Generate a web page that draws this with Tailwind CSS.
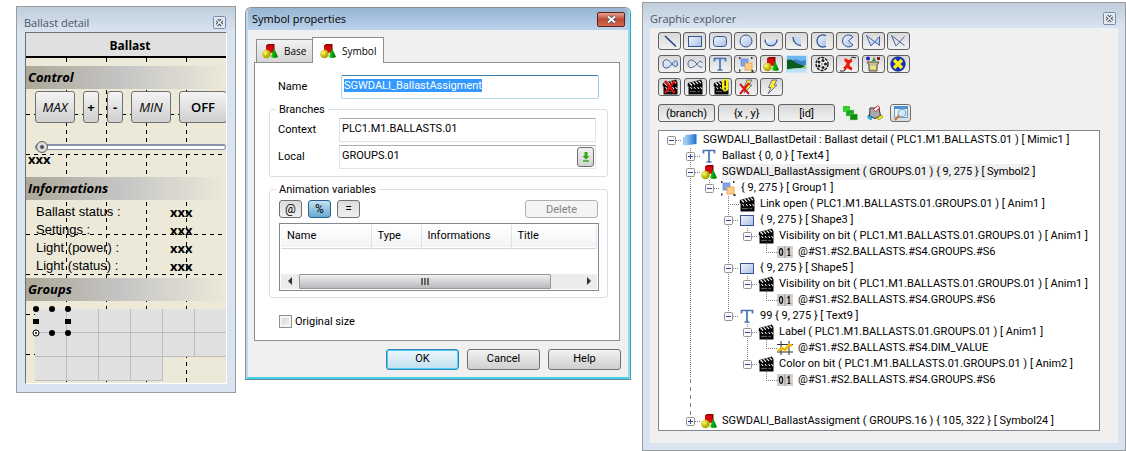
<!DOCTYPE html>
<html lang="en">

<head>
    <meta charset="UTF-8">
    <meta name="viewport" content="width=device-width, initial-scale=1.0">
    <title>Graphic explorer</title>
    <script src="https://cdn.jsdelivr.net/npm/@tailwindcss/browser@4"></script>
</head>

<body class="bg-white text-black text-[11px] leading-4 font-['Roboto','Liberation_Sans',Arial,sans-serif]">
    <!-- Icon definitions -->
    <svg class="absolute w-0 h-0" aria-hidden="true">
        <defs>
            <linearGradient id="blueFill" x1="0" y1="0" x2="1" y2="1">
                <stop offset="0" stop-color="#f2f6fd" />
                <stop offset="1" stop-color="#a9bfe8" />
            </linearGradient>
            <radialGradient id="ballFill" cx="35%" cy="35%">
                <stop offset="0" stop-color="#ffff70" />
                <stop offset="1" stop-color="#b5a800" />
            </radialGradient>
            <linearGradient id="coneFill">
                <stop offset="0" stop-color="#12d512" />
                <stop offset="1" stop-color="#046a04" />
            </linearGradient>
            <linearGradient id="screenFill">
                <stop offset="0" stop-color="#a8d4f8" />
                <stop offset="1" stop-color="#1c6fd0" />
            </linearGradient>
        </defs>
        <symbol id="i-line" viewBox="0 0 16 16">
            <path d="M3 3 14 13.500" stroke="#1f3e7c" stroke-width="1.500" />
        </symbol>
        <symbol id="i-rect" viewBox="0 0 16 16">
            <rect x="1.500" y="3.500" width="13" height="10" fill="url(#blueFill)" stroke="#35568f" />
        </symbol>
        <symbol id="i-round" viewBox="0 0 16 16">
            <rect x="1.500" y="3.500" width="13" height="10" rx="3" fill="url(#blueFill)" stroke="#35568f" />
        </symbol>
        <symbol id="i-circle" viewBox="0 0 16 16">
            <circle cx="8" cy="8" r="6" fill="url(#blueFill)" stroke="#35568f" />
        </symbol>
        <symbol id="i-half" viewBox="0 0 16 16">
            <path d="M2 6.500C2 15 14 15 14 6.500" fill="url(#blueFill)" stroke="#35568f" stroke-width="1.300" />
        </symbol>
        <symbol id="i-quarter" viewBox="0 0 16 16">
            <path d="M4 4H12V12.500C8 12.500 4 9 4 4" fill="#c9d8f2" />
            <path d="M4 4C4 9 8 12.500 12 12.500" fill="none" stroke="#35568f" stroke-width="1.300" />
        </symbol>
        <symbol id="i-chord" viewBox="0 0 16 16">
            <path d="M12 2.800A6 6 0 1 0 12 13.200" fill="url(#blueFill)" stroke="#35568f" stroke-width="1.200" />
        </symbol>
        <symbol id="i-pie" viewBox="0 0 16 16">
            <path d="M13 4A6 6 0 1 0 13 12L8.500 8Z" fill="url(#blueFill)" stroke="#35568f" />
        </symbol>
        <symbol id="i-poly" viewBox="0 0 16 16">
            <path d="M1.500 2.500 6 13 14.500 3.500V12.500Z" fill="url(#blueFill)" stroke="#43659f" />
        </symbol>
        <symbol id="i-polyline" viewBox="0 0 16 16">
            <path d="M14.500 12.500 1.500 2.500 6 13 14.500 3.500" fill="none" stroke="#43659f" />
        </symbol>
        <symbol id="i-loop" viewBox="0 0 16 16">
            <path d="M10 8C7 3 1 2 1 8S7 13 10 8 15.500 4.500 15.500 8 13 11.500 10 8Z" fill="url(#blueFill)" stroke="#43659f" />
        </symbol>
        <symbol id="i-curve" viewBox="0 0 16 16">
            <path d="M15.500 11C12 12 10 8 9 7 6 3 1 2.500 1 8S7 12 10 8 14 5 15.500 7" fill="none" stroke="#43659f" />
        </symbol>
        <symbol id="i-text" viewBox="0 0 16 16">
            <path d="M2.500 5.500V2.500H13.500V5.500M8 2.500V14M5.500 14H10.500" fill="none" stroke="#4a72b4" stroke-width="1.700" />
        </symbol>
        <symbol id="i-group" viewBox="0 0 16 16">
            <rect x="3" y="3" width="7" height="7" fill="#7fa4f0" stroke="#4f7ddb" stroke-width=".6" />
            <rect x="7" y="7" width="7" height="7" fill="#ffcf8a" stroke="#e89a3c" stroke-width=".8" />
            <path d="M1 2H2.500M13 2H14.500M1 14.500H2.500M13.500 15H15.500" stroke="#333" stroke-width="1.800" />
        </symbol>
        <symbol id="i-shapes" viewBox="0 0 16 16">
            <path d="M4 2.500 6 1H12.500V8L11 9.500H4Z" fill="#8f0000" />
            <path d="M4 2.500H11V9.500H4Z" fill="#d40a0a" />
            <path d="M12 5 16 14Q12.500 16 9 14Z" fill="url(#coneFill)" />
            <circle cx="4.500" cy="11" r="4.300" fill="url(#ballFill)" />
        </symbol>
        <symbol id="i-image" viewBox="0 0 21 18" preserveAspectRatio="none">
            <path d="M0 0H21V18H0Z" fill="#c9e8ff" />
            <path d="M1 1H20V8H1Z" fill="#6db9ef" />
            <path d="M9 4 15 6 20 5V10H4Z" fill="#3d7fc2" />
            <path d="M1 10H20V17H1Z" fill="#8dd08a" />
            <path d="M1 5Q6 3 10 8L19 11 15 13 1 14Z" fill="#0c5a20" />
            <path d="M1 15Q10 12 20 14V17H1Z" fill="#b9e3f5" />
        </symbol>
        <symbol id="i-reel" viewBox="0 0 16 16">
            <ellipse cx="8" cy="8" rx="6" ry="6.500" fill="#eee" stroke="#111" stroke-width="1.300" stroke-dasharray="3 1" />
            <g fill="#222">
                <circle cx="5" cy="6" r="1.500" />
                <circle cx="9" cy="4.500" r="1.500" />
                <circle cx="11.500" cy="8" r="1.500" />
                <circle cx="9" cy="11.500" r="1.500" />
                <circle cx="5" cy="10" r="1.500" />
                <circle cx="8" cy="8" r=".7" />
            </g>
        </symbol>
        <symbol id="i-cross" viewBox="0 0 16 16">
            <path d="M0 15H4L6 13M11 2 13 1 16 2" fill="none" stroke="#222" />
            <path d="M4.500 4Q8 4 8 8T12 13M12 4Q9 5 8 8T4 13" fill="none" stroke="#ec1c0c" stroke-width="3" />
        </symbol>
        <symbol id="i-basket" viewBox="0 0 16 16">
            <circle cx="3" cy="2.500" r="2" fill="#1b22c8" />
            <path d="M9 1 11 5H7Z" fill="#2a8a3a" />
            <rect x="12" y="1" width="3" height="3" fill="#8c2020" />
            <path d="M2 6H14L12 9V15H4V9Z" fill="#c9c096" stroke="#554f35" />
            <path d="M5 10H11V13H5Z" fill="#ece77a" />
        </symbol>
        <symbol id="i-bluex" viewBox="0 0 16 16">
            <circle cx="8" cy="8" r="7.300" fill="#1030c8" stroke="#0a1a70" stroke-width=".6" />
            <path d="M4 4 12 12M12 4 4 12" stroke="#ffee10" stroke-width="3.400" />
        </symbol>
        <symbol id="i-clap" viewBox="0 0 16 16">
            <path d="M1.500 8H15.500V15.500H1.500Z" fill="#0a0a0a" />
            <path d="M.5 7 1 4 14 .5 15.500 3.500 15.500 8H2Z" fill="#0a0a0a" />
            <path d="M2.500 4 5 6.500M5.500 3.200 8 5.700M8.500 2.400 11 4.900M11.500 1.600 14 4.100" stroke="#fff" stroke-width="1.100" />
            <path d="M3.500 8 5 10M7 8 8.500 10M10.500 8 12 10M13.500 8 15 10" stroke="#fff" />
            <path d="M3 12.500H9M10.500 12.500H13" stroke="#777" stroke-width=".8" />
        </symbol>
        <symbol id="i-clapx" viewBox="0 0 16 16">
            <use href="#i-clap" />
            <path d="M3 2 12.500 14M12.500 2 3 14" stroke="#e01010" stroke-width="2.600" />
        </symbol>
        <symbol id="i-clapwarn" viewBox="0 0 16 16">
            <use href="#i-clap" />
            <rect x="9" y="0" width="6.500" height="12" rx="3" fill="#ffee10" />
            <path d="M12.200 1.500V7M12.200 8.500V10.500" stroke="#222" stroke-width="1.500" />
        </symbol>
        <symbol id="i-bolt" viewBox="0 0 16 16">
            <path d="M8 1H13L10 6H13L4 15 7 8.500H4.500Z" fill="#ffee20" stroke="#4656c8" stroke-width=".8" />
        </symbol>
        <symbol id="i-boltx" viewBox="0 0 16 16">
            <path d="M9 1H14L11 6H14L6 14 8 8.500H6Z" fill="#ffee20" stroke="#4656c8" stroke-width=".8" />
            <path d="M2 5 11 15M11 4 2 15" stroke="#e01010" stroke-width="2" />
        </symbol>
        <symbol id="i-green" viewBox="0 0 16 16">
            <rect x="1" y="1" width="7" height="6" fill="#35cf2c" />
            <rect x="4" y="5" width="8" height="6" fill="#1aa51a" stroke="#8fe089" stroke-width=".5" />
            <rect x="8" y="9" width="7.500" height="6" fill="#0d8f10" stroke="#8fe089" stroke-width=".5" />
        </symbol>
        <symbol id="i-paint" viewBox="0 0 16 16">
            <path d="M3 3H12L13.500 11 8 13.500 2.500 11Z" fill="#aaa" stroke="#333" />
            <path d="M6.500 4.500 10.500 1 13 2.500 8.500 6.500Z" fill="#fff" stroke="#d02020" />
            <path d="M1 10 5 12.500 4 15 1 13Z" fill="#20c8f0" stroke="#1060a0" stroke-width=".6" />
            <path d="M10 13 14.500 10 16 12 12 15Z" fill="#ffee10" stroke="#807000" stroke-width=".6" />
        </symbol>
        <symbol id="i-find" viewBox="0 0 16 16">
            <path d="M1.500 1.500H14.500V12.500H1.500Z" fill="#e8f3fc" stroke="#6b9cc8" />
            <path d="M1 1H15V4H1Z" fill="#4d92d0" />
            <circle cx="9" cy="8" r="3.800" fill="#d3e9f8" stroke="#86a9c4" stroke-width="1.200" />
            <path d="M6 10.500 2 15" stroke="#c47a45" stroke-width="2.200" />
        </symbol>
        <symbol id="i-screen" viewBox="0 0 16 16">
            <path d="M1 5H4V13H1Z" fill="#9ccaf2" />
            <path d="M3 3 14.500 2V12L3 13.500Z" fill="url(#screenFill)" />
        </symbol>
        <symbol id="i-bits" viewBox="0 0 16 16">
            <rect x="0" y="2" width="16" height="12" fill="#d4d0cb" />
            <path d="M8 2V14" stroke="#999" />
            <ellipse cx="4" cy="8" rx="1.600" ry="3.300" fill="none" stroke="#111" stroke-width="1.300" />
            <path d="M10.500 6 12 4.500V11.500M10.500 11.500H13.500" fill="none" stroke="#111" stroke-width="1.200" />
        </symbol>
        <symbol id="i-chart" viewBox="0 0 16 16">
            <path d="M4 1V15M12 1V15M0 4.500H16M0 12H16" stroke="#333" />
            <path d="M1 11 5 8 8 10 12 5 15 5.500" fill="none" stroke="#f5b800" stroke-width="2.600" />
        </symbol>
        <symbol id="i-plus" viewBox="0 0 9 9">
            <rect x=".5" y=".5" width="8" height="8" rx="1" fill="#fafafa" stroke="#919191" />
            <path d="M2 4.500H7M4.500 2V7" stroke="#3045a0" />
        </symbol>
        <symbol id="i-minus" viewBox="0 0 9 9">
            <rect x=".5" y=".5" width="8" height="8" rx="1" fill="#fafafa" stroke="#919191" />
            <path d="M2 4.500H7" stroke="#3045a0" />
        </symbol>
        <symbol id="i-close" viewBox="0 0 13 13">
            <rect x=".5" y=".5" width="12" height="12" rx="1" fill="#dfe8f3" stroke="#7a8ba6" />
            <path d="M4 4 9 9M9 4 4 9" stroke="#444c58" stroke-width="3.200" />
            <path d="M4 4 9 9M9 4 4 9" stroke="#fff" stroke-width="1.200" />
        </symbol>
    </svg>

    <main class="flex items-start pl-4 pt-[2px]">
        <!-- Ballast detail -->
        <section class="mt-1 w-[220px] shrink-0 border border-[#9c9c9c] bg-[#d9e4f1] px-2 pb-2 font-['Open_Sans','Noto_Sans',sans-serif]">
            <header class="-mx-2 flex h-[25px] items-center justify-between bg-linear-to-b from-[#bfcddb] to-[#d9e4f1] pl-[7px] pr-[9px] pt-[6px]">
                <h2 class="text-[11px] text-[#4c5560]">Ballast detail</h2>
                <button type="button" aria-label="Close"><svg class="block h-[13px] w-[13px]"><use href="#i-close" /></svg></button>
            </header>
            <div class="relative overflow-hidden border border-t-[#707070] border-l-[#707070] border-r-white border-b-white bg-[#ece9d8]">
                <!-- 40px layout grid -->
                <svg class="absolute inset-0 h-full w-full" fill="none" stroke="#000" stroke-dasharray="4 4">
                    <path d="M40.500 25V350M80.500 25V350M120.500 25V350M160.500 25V350" />
                    <path d="M0 81.500H220M0 121.500H220M0 201.500H220M0 241.500H220M0 281.500H220M0 321.500H220" />
                </svg>
                <div class="relative">
                    <h3 class="h-[25px] border-b-2 border-black bg-[#e0e0e0] pt-1 pl-2 text-center text-xs leading-[18px] font-bold">Ballast</h3>
                    <h4 class="mt-2 h-[23px] bg-linear-to-r from-[#aca899] via-[#c6c6c6] to-[#ece9d8] pl-[2px] text-[13px] leading-[23px] font-bold italic">Control</h4>
                    <div class="mt-[2px] flex h-8 gap-2 pl-[9px] text-[13px]">
                        <button type="button" class="w-10 shrink-0 rounded-[3px] border border-[#707070] bg-linear-to-b from-[#f4f4f4] to-[#cfcfcf] italic">MAX</button>
                        <button type="button" class="w-4 shrink-0 rounded-[3px] border border-[#707070] bg-linear-to-b from-[#f4f4f4] to-[#cfcfcf] font-bold">+</button>
                        <button type="button" class="w-4 shrink-0 rounded-[3px] border border-[#707070] bg-linear-to-b from-[#f4f4f4] to-[#cfcfcf] font-bold">-</button>
                        <button type="button" class="w-10 shrink-0 rounded-[3px] border border-[#707070] bg-linear-to-b from-[#f4f4f4] to-[#cfcfcf] italic">MIN</button>
                        <button type="button" class="w-12 shrink-0 rounded-[3px] border border-[#707070] bg-linear-to-b from-[#f4f4f4] to-[#cfcfcf] font-semibold">OFF</button>
                    </div>
                    <input type="range" value="0" aria-label="Level"
                        class="mt-[17px] ml-[9px] block h-[13px] w-[191px] appearance-none bg-transparent [&::-webkit-slider-runnable-track]:h-[6px] [&::-webkit-slider-runnable-track]:rounded-full [&::-webkit-slider-runnable-track]:border [&::-webkit-slider-runnable-track]:border-t-2 [&::-webkit-slider-runnable-track]:border-[#8a90a8] [&::-webkit-slider-runnable-track]:bg-white [&::-webkit-slider-thumb]:-mt-[5px] [&::-webkit-slider-thumb]:h-3 [&::-webkit-slider-thumb]:w-3 [&::-webkit-slider-thumb]:appearance-none [&::-webkit-slider-thumb]:rounded-full [&::-webkit-slider-thumb]:border [&::-webkit-slider-thumb]:border-[#666666] [&::-webkit-slider-thumb]:bg-[radial-gradient(circle,#444_0,#444_1px,#eee_3px,#bbb_6px)]">
                    <p class="h-6 pl-[2px] text-[13px] leading-[13px] font-bold">xxx</p>
                    <h4 class="h-[23px] bg-linear-to-r from-[#aca899] via-[#c6c6c6] to-[#ece9d8] pl-[2px] text-[13px] leading-[23px] font-bold italic">Informations</h4>
                    <dl class="grid grid-cols-[134px_1fr] pt-[3px] pb-[3px] pl-[10px] text-[13px] leading-[18px]">
                        <dt class="font-['Liberation_Sans',sans-serif]">Ballast status :</dt>
                        <dd class="font-bold">xxx</dd>
                        <dt class="font-['Liberation_Sans',sans-serif]">Settings :</dt>
                        <dd class="font-bold">xxx</dd>
                        <dt class="font-['Liberation_Sans',sans-serif]">Light (power) :</dt>
                        <dd class="font-bold">xxx</dd>
                        <dt class="font-['Liberation_Sans',sans-serif]">Light (status) :</dt>
                        <dd class="font-bold">xxx</dd>
                    </dl>
                    <h4 class="h-[23px] bg-linear-to-r from-[#aca899] via-[#c6c6c6] to-[#ece9d8] pl-[2px] text-[13px] leading-[23px] font-bold italic">Groups</h4>
                    <div class="relative mt-2 mb-[2px] ml-[9px]">
                        <div class="grid w-48 auto-rows-[24px] grid-cols-6 *:border-r *:border-b *:border-[#bdbdbd] *:bg-[#e0e0e0]">
                            <i></i><i></i><i></i><i></i><i></i><i></i>
                            <i></i><i></i><i></i><i></i><i></i><i></i>
                            <i></i><i></i><i></i><i></i>
                        </div>
                        <!-- selection handles -->
                        <svg class="absolute -top-1 -left-1 h-9 w-11" viewBox="-4 -4 44 36">
                            <g>
                                <circle cx="1" cy="0" r="3" />
                                <circle cx="17" cy="0" r="3" />
                                <circle cx="33" cy="0" r="3" />
                                <rect x="-2" y="10" width="6" height="5" />
                                <rect x="30" y="10" width="6" height="5" />
                                <circle cx="17" cy="24" r="3" />
                                <circle cx="33" cy="24" r="3" />
                            </g>
                            <circle cx="1" cy="24" r="3" fill="#fff" stroke="#000" />
                            <circle cx="1" cy="24" r="1" />
                        </svg>
                    </div>
                </div>
            </div>
        </section>

        <!-- Symbol properties -->
        <section class="mt-[5px] ml-[9px] w-[386px] shrink-0 rounded-t-md border border-[#8e8e8e] border-r-[#4a9bb5] border-b-[#5f8d99] bg-[#f0f0f0]">
            <div class="rounded-t-md border-x-2 border-b-2 border-[#c3d6ea] border-r-[#8fdcf2] border-b-[#45cfe8] pb-[7px]">
                <header class="flex h-[22px] items-center justify-between rounded-t-sm bg-linear-to-b from-[#96b4d2] to-[#bcd3ec] pl-1 pr-[3px]">
                    <h2 class="font-['Open_Sans','Noto_Sans',sans-serif] text-[11px]">Symbol properties</h2>
                    <button type="button" aria-label="Close" class="flex h-[15px] w-7 items-center justify-center rounded-[2px] border border-[#5c1f1c] bg-linear-to-b from-[#e3a294] via-[#bd4a35] to-[#cf6a50]">
                        <svg class="h-[9px] w-[11px]" viewBox="0 0 11 9">
                            <path d="M2 1.500 9 7.500M9 1.500 2 7.500" stroke="#4a4a55" stroke-width="3.600" />
                            <path d="M2 1.500 9 7.500M9 1.500 2 7.500" stroke="#fff" stroke-width="2" />
                        </svg>
                    </button>
                </header>
                <form id="symbolForm" class="pt-[7px] pr-2 pl-[6px]">
                    <div class="relative -mb-px flex items-end pl-[2px] font-['Open_Sans','Noto_Sans',sans-serif] text-[10px]">
                        <button type="button" class="mb-px flex h-[23px] w-[57px] items-center gap-[6px] border border-b-0 border-[#8c8e94] bg-linear-to-b from-[#f2f2f2] to-[#d6d6d6] pl-[5px]">
                            <svg class="h-4 w-4"><use href="#i-shapes" /></svg>Base
                        </button>
                        <button type="button" class="-ml-px flex h-[26px] w-[72px] items-center gap-[6px] border border-b-0 border-[#8c8e94] bg-white pl-[7px]">
                            <svg class="h-4 w-4"><use href="#i-shapes" /></svg>Symbol
                        </button>
                    </div>
                    <div class="border border-[#8c8e94] bg-white px-[14px] pt-3 pb-[10px]">
                        <div class="flex items-center pl-[9px] pr-[6px]">
                            <label for="name" class="w-[63px]">Name</label>
                            <input type="text" id="name" value="SGWDALI_BallastAssigment"
                                class="h-6 min-w-0 flex-1 rounded-[2px] border border-t-[#3d7bad] border-r-[#a4c9e3] border-b-[#b7d9ed] border-l-[#b5cfe7] px-[2px] pb-1 outline-none selection:bg-[#3399ff] selection:text-white">
                        </div>
                        <fieldset class="relative mt-[10px] -mr-[3px] space-y-[3px] rounded-[3px] border border-[#d5dfe5] pt-2 pr-[11px] pb-[7px] pl-2">
                            <legend class="absolute -top-2 left-[6px] bg-white px-[3px]">Branches</legend>
                            <div class="flex items-center">
                                <label for="context" class="w-[61px]">Context</label>
                                <input type="text" id="context" value="PLC1.M1.BALLASTS.01"
                                    class="h-6 min-w-0 flex-1 border border-[#e2e3ea] border-t-[#abadb3] px-[2px] pb-1">
                            </div>
                            <div class="relative flex items-center">
                                <label for="local" class="w-[61px]">Local</label>
                                <input type="text" id="local" value="GROUPS.01"
                                    class="h-6 min-w-0 flex-1 border border-[#e2e3ea] border-t-[#abadb3] px-[2px] pb-1">
                                <button type="button" aria-label="Browse" class="absolute top-[2px] right-[2px] flex h-5 w-[17px] items-center justify-center rounded-[3px] border border-[#707070] bg-linear-to-b from-[#f2f2f2] to-[#d2d2d2]">
                                    <svg class="h-[10px] w-2" viewBox="0 0 8 10">
                                        <path d="M2.500 0H5.500V4H7.500L4 7.500.5 4H2.500Z" fill="#2fa80c" />
                                        <path d="M1 9H7" stroke="#2fa80c" stroke-width="1.400" />
                                    </svg>
                                </button>
                            </div>
                        </fieldset>
                        <fieldset class="relative mt-3 -mr-[3px] rounded-[3px] border border-[#d5dfe5] pt-[10px] pr-2 pb-[6px] pl-[9px]">
                            <legend class="absolute -top-2 left-[6px] bg-white px-[3px]">Animation variables</legend>
                            <div class="flex gap-[6px] pr-px text-xs leading-none">
                                <button type="button" class="h-[18px] w-[23px] rounded-[3px] border border-[#707070] bg-linear-to-b from-[#dcdcdc] to-[#f0f0f0]">@</button>
                                <button type="button" class="h-[18px] w-[23px] rounded-[3px] border border-[#2c628b] bg-linear-to-b from-[#c4e1f2] to-[#64aad2]">%</button>
                                <button type="button" class="h-[18px] w-[23px] rounded-[3px] border border-[#707070] bg-linear-to-b from-[#dcdcdc] to-[#f0f0f0]">=</button>
                                <button type="button" disabled class="ml-auto h-[18px] w-[73px] rounded-[3px] border border-[#adb2b5] bg-[#f4f4f4] text-[11px] leading-none text-[#838383]">Delete</button>
                            </div>
                            <div class="mt-[5px] border border-[#828790] px-px pt-px pb-px">
                                <table class="w-full table-fixed text-left">
                                    <thead>
                                        <tr class="h-[23px] border-b border-[#d5d5d5] bg-linear-to-b from-white to-[#f1f3f5] *:border-r *:border-[#e0e3e6] *:pl-[6px] *:font-normal">
                                            <th class="w-[90px]">Name</th>
                                            <th class="w-[50px]">Type</th>
                                            <th class="w-[90px]">Informations</th>
                                            <th>Title</th>
                                        </tr>
                                    </thead>
                                </table>
                                <div class="mt-[25px] flex h-[15px] items-center bg-[#ececec]">
                                    <svg class="h-2 w-[18px]" viewBox="0 0 18 8"><path d="M11 0V8L7 4Z" fill="#333" /></svg>
                                    <div class="flex h-[15px] flex-[0_0_252px] items-center justify-center gap-px rounded-[1px] border border-[#979797] bg-linear-to-b from-[#f0f0f0] to-[#b9b9bd]">
                                        <i class="h-[7px] w-[2px] bg-[#666666]"></i>
                                        <i class="h-[7px] w-[2px] bg-[#666666]"></i>
                                        <i class="h-[7px] w-[2px] bg-[#666666]"></i>
                                    </div>
                                    <svg class="ml-auto h-2 w-[18px]" viewBox="0 0 18 8"><path d="M8 0V8L12 4Z" fill="#333" /></svg>
                                </div>
                            </div>
                        </fieldset>
                        <div class="mt-4 flex items-center gap-[3px] pl-[10px]">
                            <input type="checkbox" id="originalSize" class="h-[13px] w-[13px] appearance-none border border-[#8e8f8f] bg-linear-to-br from-[#cfd3d8] to-[#f6f6f6] ring-2 ring-[#f4f4f4] ring-inset">
                            <label for="originalSize">Original size</label>
                        </div>
                    </div>
                    <div class="mt-2 -mr-px flex justify-end gap-2">
                        <button type="submit" class="h-[21px] w-[73px] rounded-[3px] border border-[#3c7fb1] bg-linear-to-b from-[#eef7fc] to-[#bfe0f0] ring-1 ring-[#48d0f5] ring-inset">OK</button>
                        <button type="button" class="h-[21px] w-[73px] rounded-[3px] border border-[#707070] bg-linear-to-b from-[#f2f2f2] to-[#cfcfcf]">Cancel</button>
                        <button type="button" class="h-[21px] w-[73px] rounded-[3px] border border-[#707070] bg-linear-to-b from-[#f2f2f2] to-[#cfcfcf]">Help</button>
                    </div>
                </form>
            </div>
        </section>

        <!-- Graphic explorer -->
        <section class="ml-[11px] min-w-0 flex-1 border border-[#9c9c9c] bg-[#d9e4f1] px-[7px] pb-[7px]">
            <header class="-mx-[7px] flex h-[25px] items-center justify-between bg-linear-to-b from-[#bfcddb] to-[#d9e4f1] pl-[7px] pr-[9px] pt-[6px]">
                <h2 class="font-['Open_Sans','Noto_Sans',sans-serif] text-[11px] text-[#4c5560]">Graphic explorer</h2>
                <button type="button" aria-label="Close"><svg class="block h-[13px] w-[13px]"><use href="#i-close" /></svg></button>
            </header>
            <div class="bg-[#f0f0f0] pt-1 pr-[18px] pb-3 pl-2">
                <div class="space-y-[5px] [&_button]:flex [&_button]:h-[18px] [&_button]:w-[23px] [&_button]:items-center [&_button]:justify-center [&_button]:rounded-[3px] [&_button]:border [&_button]:border-[#606060] [&_button]:bg-linear-to-b [&_button]:from-[#d8d8d8] [&_button]:to-[#f2f2f2] [&_svg]:h-4 [&_svg]:w-4">
                    <div class="flex w-[252px] justify-between">
                        <button type="button" title="Line"><svg><use href="#i-line" /></svg></button>
                        <button type="button" title="Rectangle"><svg><use href="#i-rect" /></svg></button>
                        <button type="button" title="Rounded rectangle"><svg><use href="#i-round" /></svg></button>
                        <button type="button" title="Ellipse"><svg><use href="#i-circle" /></svg></button>
                        <button type="button" title="Half ellipse"><svg><use href="#i-half" /></svg></button>
                        <button type="button" title="Arc"><svg><use href="#i-quarter" /></svg></button>
                        <button type="button" title="Chord"><svg><use href="#i-chord" /></svg></button>
                        <button type="button" title="Pie"><svg><use href="#i-pie" /></svg></button>
                        <button type="button" title="Polygon"><svg><use href="#i-poly" /></svg></button>
                        <button type="button" title="Polyline"><svg><use href="#i-polyline" /></svg></button>
                    </div>
                    <div class="flex w-[252px] justify-between">
                        <button type="button" title="Closed curve"><svg><use href="#i-loop" /></svg></button>
                        <button type="button" title="Curve"><svg><use href="#i-curve" /></svg></button>
                        <button type="button" title="Text"><svg><use href="#i-text" /></svg></button>
                        <button type="button" title="Group"><svg><use href="#i-group" /></svg></button>
                        <button type="button" title="Symbol"><svg><use href="#i-shapes" /></svg></button>
                        <button type="button" title="Image" class="border-0!"><svg class="h-[18px]! w-[21px]!"><use href="#i-image" /></svg></button>
                        <button type="button" title="Movie"><svg><use href="#i-reel" /></svg></button>
                        <button type="button" title="ActiveX"><svg><use href="#i-cross" /></svg></button>
                        <button type="button" title="Objects"><svg><use href="#i-basket" /></svg></button>
                        <button type="button" title="Exclude"><svg><use href="#i-bluex" /></svg></button>
                    </div>
                    <div class="flex w-[125px] justify-between">
                        <button type="button" title="No animation"><svg><use href="#i-clapx" /></svg></button>
                        <button type="button" title="Animation"><svg><use href="#i-clap" /></svg></button>
                        <button type="button" title="Animation warning"><svg><use href="#i-clapwarn" /></svg></button>
                        <button type="button" title="No event"><svg><use href="#i-boltx" /></svg></button>
                        <button type="button" title="Event"><svg><use href="#i-bolt" /></svg></button>
                    </div>
                </div>
                <div class="mt-2 flex items-center gap-[3px]">
                    <button type="button" class="h-[18px] w-[57px] rounded-[3px] border border-[#606060] bg-linear-to-b from-[#d8d8d8] to-[#f2f2f2] leading-none">(branch)</button>
                    <button type="button" class="h-[18px] w-[57px] rounded-[3px] border border-[#606060] bg-linear-to-b from-[#d8d8d8] to-[#f2f2f2] leading-none">{x , y}</button>
                    <button type="button" class="h-[18px] w-[57px] rounded-[3px] border border-[#606060] bg-linear-to-b from-[#d8d8d8] to-[#f2f2f2] leading-none">[id]</button>
                    <button type="button" title="Expand" class="ml-1"><svg class="block h-4 w-4"><use href="#i-green" /></svg></button>
                    <button type="button" title="Colors" class="ml-[6px]"><svg class="block h-4 w-4"><use href="#i-paint" /></svg></button>
                    <button type="button" title="Find" class="ml-1 flex h-[18px] w-[21px] items-center justify-center rounded-[3px] border border-[#707070] bg-linear-to-b from-[#f4f4f4] to-[#dcdcdc]"><svg class="h-4 w-4"><use href="#i-find" /></svg></button>
                </div>

                <div class="relative mt-2 overflow-hidden border border-[#828790] bg-white pt-px pb-px pl-2 whitespace-nowrap [&_ul]:pl-[19px] [&_p]:flex [&_p]:h-4 [&_p]:items-center [&_p>svg:nth-child(1)]:mr-[6px] [&_p>svg:nth-child(1)]:h-[9px] [&_p>svg:nth-child(1)]:w-[9px] [&_p>svg:nth-child(2)]:mr-[5px] [&_p>svg:nth-child(2)]:h-4 [&_p>svg:nth-child(2)]:w-4">
                    <!-- connector lines -->
                    <svg class="absolute inset-0 h-full w-full" fill="none" stroke="#808080" stroke-dasharray="1 1">
                        <path d="M17 9.500H23M36 25.500H42M36 41.500H42M55 57.500H61M69 73.500H80M74 89.500H80M93 105.500H99M107 121.500H118M74 137.500H80M93 153.500H99M107 169.500H118M74 185.500H80M93 201.500H99M107 217.500H118M93 233.500H99M107 249.500H118M36 290.500H42" />
                        <path d="M31.500 17V246M50.500 49V53M69.500 65V185M88.500 97V101M107.500 113V121M88.500 145V149M107.500 161V169M88.500 193V229M107.500 209V217M107.500 241V249" />
                        <path d="M31.500 248V286" stroke-dasharray="4 4" />
                    </svg>
                    <div class="relative">
                        <p><svg><use href="#i-minus" /></svg><svg><use href="#i-screen" /></svg>SGWDALI_BallastDetail : Ballast detail ( PLC1.M1.BALLASTS.01 ) [ Mimic1 ]</p>
                        <ul>
                            <li>
                                <p><svg><use href="#i-plus" /></svg><svg><use href="#i-text" /></svg>Ballast { 0, 0 } [ Text4 ]</p>
                            </li>
                            <li>
                                <p><svg><use href="#i-minus" /></svg><svg><use href="#i-shapes" /></svg><span class="bg-[#f0f0f0]">SGWDALI_BallastAssigment ( GROUPS.01 ) { 9, 275 } [ Symbol2 ]</span></p>
                                <ul>
                                    <li>
                                        <p><svg><use href="#i-minus" /></svg><svg><use href="#i-group" /></svg>{ 9, 275 } [ Group1 ]</p>
                                        <ul>
                                            <li>
                                                <p><svg></svg><svg><use href="#i-clap" /></svg>Link open ( PLC1.M1.BALLASTS.01.GROUPS.01 ) [ Anim1 ]</p>
                                            </li>
                                            <li>
                                                <p><svg><use href="#i-minus" /></svg><svg><use href="#i-rect" /></svg>{ 9, 275 } [ Shape3 ]</p>
                                                <ul>
                                                    <li>
                                                        <p><svg><use href="#i-minus" /></svg><svg><use href="#i-clap" /></svg>Visibility on bit ( PLC1.M1.BALLASTS.01.GROUPS.01 ) [ Anim1 ]</p>
                                                        <ul>
                                                            <li><p><svg></svg><svg><use href="#i-bits" /></svg>@#S1.#S2.BALLASTS.#S4.GROUPS.#S6</p></li>
                                                        </ul>
                                                    </li>
                                                </ul>
                                            </li>
                                            <li>
                                                <p><svg><use href="#i-minus" /></svg><svg><use href="#i-rect" /></svg>{ 9, 275 } [ Shape5 ]</p>
                                                <ul>
                                                    <li>
                                                        <p><svg><use href="#i-minus" /></svg><svg><use href="#i-clap" /></svg>Visibility on bit ( PLC1.M1.BALLASTS.01.GROUPS.01 ) [ Anim1 ]</p>
                                                        <ul>
                                                            <li><p><svg></svg><svg><use href="#i-bits" /></svg>@#S1.#S2.BALLASTS.#S4.GROUPS.#S6</p></li>
                                                        </ul>
                                                    </li>
                                                </ul>
                                            </li>
                                            <li>
                                                <p><svg><use href="#i-minus" /></svg><svg><use href="#i-text" /></svg>99 { 9, 275 } [ Text9 ]</p>
                                                <ul>
                                                    <li>
                                                        <p><svg><use href="#i-minus" /></svg><svg><use href="#i-clap" /></svg>Label ( PLC1.M1.BALLASTS.01.GROUPS.01 ) [ Anim1 ]</p>
                                                        <ul>
                                                            <li><p><svg></svg><svg><use href="#i-chart" /></svg>@#S1.#S2.BALLASTS.#S4.DIM_VALUE</p></li>
                                                        </ul>
                                                    </li>
                                                    <li>
                                                        <p><svg><use href="#i-minus" /></svg><svg><use href="#i-clap" /></svg>Color on bit ( PLC1.M1.BALLASTS.01.GROUPS.01 ) [ Anim2 ]</p>
                                                        <ul>
                                                            <li><p><svg></svg><svg><use href="#i-bits" /></svg>@#S1.#S2.BALLASTS.#S4.GROUPS.#S6</p></li>
                                                        </ul>
                                                    </li>
                                                </ul>
                                            </li>
                                        </ul>
                                    </li>
                                </ul>
                            </li>
                            <li class="mt-[25px]">
                                <p><svg><use href="#i-plus" /></svg><svg><use href="#i-shapes" /></svg>SGWDALI_BallastAssigment ( GROUPS.16 ) { 105, 322 } [ Symbol24 ]</p>
                            </li>
                        </ul>
                    </div>
                </div>
            </div>
        </section>
    </main>

    <script>
        const nameInput = document.querySelector('#name');
        nameInput.focus();
        nameInput.select();

        document.querySelector('#symbolForm').addEventListener('submit', (event) => {
            event.preventDefault();
        });
    </script>
</body>

</html>
